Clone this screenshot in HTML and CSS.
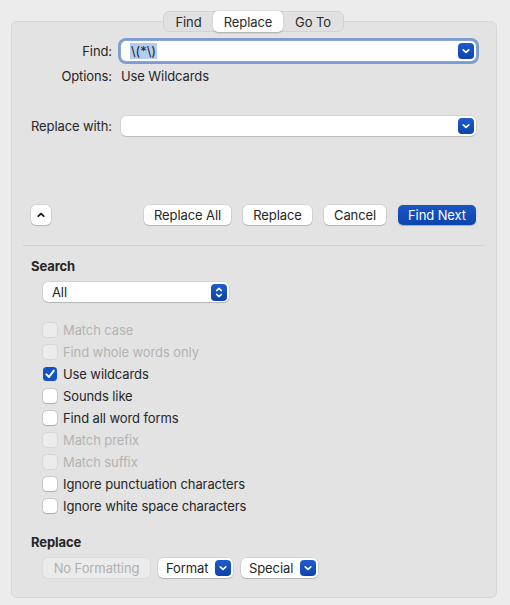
FILE: index.html
```html
<!DOCTYPE html>
<html>
<head>
<meta charset="utf-8">
<link rel="stylesheet" href="styles.css">
</head>
<body>
<div class="tabs">
  <div class="tab t-find">Find</div>
  <div class="tab t-replace sel">Replace</div>
  <div class="tab t-goto">Go To</div>
</div>
<div class="panel">
  <div class="row row-find">
    <div class="lbl">Find:</div>
    <div class="field focus">
      <span class="ftext"><span class="hl">\(*\)</span></span>
      <span class="drop"><svg width="16" height="16" viewBox="0 0 16 16"><path d="M5.2 6.8 L8 9.4 L10.8 6.8" fill="none" stroke="#fff" stroke-width="1.6" stroke-linecap="round" stroke-linejoin="round"/></svg></span>
    </div>
  </div>
  <div class="row row-options">
    <div class="lbl">Options:</div>
    <div class="val">Use Wildcards</div>
  </div>
  <div class="row row-replace">
    <div class="lbl">Replace with:</div>
    <div class="field">
      <span class="ftext"></span>
      <span class="drop"><svg width="16" height="16" viewBox="0 0 16 16"><path d="M5.2 6.8 L8 9.4 L10.8 6.8" fill="none" stroke="#fff" stroke-width="1.6" stroke-linecap="round" stroke-linejoin="round"/></svg></span>
    </div>
  </div>
  <div class="actions">
    <div class="btn btn-up"><svg width="20" height="20" viewBox="0 0 20 20"><path d="M7.3 11.2 L10 8.6 L12.7 11.2" fill="none" stroke="#1a1a1a" stroke-width="1.8" stroke-linecap="round" stroke-linejoin="round"/></svg></div>
    <div class="spacer"></div>
    <div class="btn w-all">Replace All</div>
    <div class="btn w-rep">Replace</div>
    <div class="btn w-cancel">Cancel</div>
    <div class="btn primary w-next">Find Next</div>
  </div>
  <div class="sep"></div>
  <div class="heading h-search">Search</div>
  <div class="popup">
    <span class="ptext">All</span>
    <span class="stepper"><svg width="16" height="17" viewBox="0 0 16 17"><path d="M5.6 6.6 L8 4.4 L10.4 6.6 M5.6 10.4 L8 12.6 L10.4 10.4" fill="none" stroke="#fff" stroke-width="1.5" stroke-linecap="round" stroke-linejoin="round"/></svg></span>
  </div>
  <div class="checks">
    <div class="chk dis"><span class="box"></span><span>Match case</span></div>
    <div class="chk dis"><span class="box"></span><span>Find whole words only</span></div>
    <div class="chk"><span class="box on"><svg width="14" height="14" viewBox="0 0 14 14"><path d="M3.4 7.4 L6 10 L10.8 3.6" fill="none" stroke="#fff" stroke-width="2" stroke-linecap="round" stroke-linejoin="round"/></svg></span><span>Use wildcards</span></div>
    <div class="chk"><span class="box"></span><span>Sounds like</span></div>
    <div class="chk"><span class="box"></span><span>Find all word forms</span></div>
    <div class="chk dis"><span class="box"></span><span>Match prefix</span></div>
    <div class="chk dis"><span class="box"></span><span>Match suffix</span></div>
    <div class="chk"><span class="box"></span><span>Ignore punctuation characters</span></div>
    <div class="chk"><span class="box"></span><span>Ignore white space characters</span></div>
  </div>
  <div class="heading h-replace">Replace</div>
  <div class="fmt-row">
    <div class="btn disabled w-nofmt">No Formatting</div>
    <div class="btn pop w-format"><span>Format</span><span class="drop sm"><svg width="16" height="16" viewBox="0 0 16 16"><path d="M5.2 6.8 L8 9.4 L10.8 6.8" fill="none" stroke="#fff" stroke-width="1.6" stroke-linecap="round" stroke-linejoin="round"/></svg></span></div>
    <div class="btn pop w-special"><span>Special</span><span class="drop sm"><svg width="16" height="16" viewBox="0 0 16 16"><path d="M5.2 6.8 L8 9.4 L10.8 6.8" fill="none" stroke="#fff" stroke-width="1.6" stroke-linecap="round" stroke-linejoin="round"/></svg></span></div>
  </div>
</div>
</body>
</html>
```

FILE: styles.css
```css
* { box-sizing: border-box; }
html, body { margin: 0; padding: 0; }
body {
  width: 510px;
  height: 605px;
  background: #ececec;
  font-family: Inter, "Liberation Sans", sans-serif;
  font-size: 13px;
  letter-spacing: -0.1px;
  color: #262626;
  padding-top: 11px;
  overflow: hidden;
}
.tabs {
  position: relative;
  z-index: 2;
  display: flex;
  width: 181px;
  height: 21px;
  margin: 0 0 -11px 163px;
  background: #e1e1e1;
  border: 1px solid #d3d3d3;
  border-radius: 6px;
  padding: 0;
}
.tab {
  display: flex;
  align-items: center;
  justify-content: center;
  height: 19px;
  font-size: 13px;
  color: #2a2a2a;
}
.t-find { width: 49px; }
.t-replace { width: 70px; }
.t-goto { width: 60px; }
.tab.sel {
  background: #fff;
  border-radius: 5px;
  height: 21px;
  margin-top: -1px;
  box-shadow: 0 0.5px 1.5px rgba(0,0,0,0.25);
}
.panel {
  margin-left: 11px;
  width: 486px;
  height: 577px;
  background: #e3e3e3;
  border: 1px solid #d7d7d7;
  border-radius: 6px;
  padding-top: 19px;
}
.row {
  display: flex;
  align-items: center;
  height: 20px;
}
.lbl {
  width: 100px;
  text-align: right;
  flex: none;
}
.val { margin-left: 9px; }
.field {
  margin-left: 9px;
  width: 355px;
  height: 20px;
  background: #fff;
  border-radius: 5px;
  box-shadow: 0 0 0 0.5px rgba(0,0,0,0.12), 0 1px 1px rgba(0,0,0,0.12);
  display: flex;
  align-items: center;
  padding-left: 9px;
  padding-right: 2px;
}
.field.focus {
  box-shadow: 0 0 0 1px #8aa6d8, 0 0 0 3px #7d9cd4;
}
.ftext { flex: 1; display: flex; align-items: center; }
.hl {
  background: #b3cdf1;
  padding: 0 1px;
  line-height: 16px;
}
.drop {
  width: 16px;
  height: 16px;
  border-radius: 4px;
  background: linear-gradient(#1f5bd0, #0d43a8);
  display: flex;
  flex: none;
}
.row-options { margin-top: 5px; }
.row-replace { margin-top: 30px; }
.actions {
  display: flex;
  align-items: center;
  margin-top: 69px;
  padding-left: 19px;
  padding-right: 20px;
  gap: 12px;
  height: 20px;
}
.spacer { flex: 1; }
.btn {
  height: 20px;
  background: #fff;
  border-radius: 5px;
  box-shadow: 0 0 0 0.5px rgba(0,0,0,0.14), 0 1px 1px rgba(0,0,0,0.14);
  display: flex;
  align-items: center;
  justify-content: center;
  flex: none;
  color: #262626;
}
.btn-up { width: 20px; }
.w-all { width: 87px; }
.w-rep { width: 69px; }
.w-cancel { width: 62px; }
.w-next { width: 78px; }
.btn.primary {
  background: linear-gradient(#1b55c4, #0c45ac);
  color: #fff;
  box-shadow: 0 0.5px 1px rgba(0,0,0,0.25);
}
.sep {
  margin: 20px 12px 0 11px;
  height: 1px;
  background: #d0d0d0;
}
.heading {
  font-weight: 700;
  line-height: 16px;
  padding-left: 19px;
}
.h-search { margin-top: 12px; }
.popup {
  margin: 8px 0 0 31px;
  width: 186px;
  height: 20px;
  background: #fff;
  border-radius: 5px;
  box-shadow: 0 0 0 0.5px rgba(0,0,0,0.14), 0 1px 1px rgba(0,0,0,0.14);
  display: flex;
  align-items: center;
  padding-left: 9px;
  padding-right: 2px;
}
.ptext { flex: 1; }
.stepper {
  width: 16px;
  height: 17px;
  border-radius: 4px;
  background: linear-gradient(#1f5bd0, #0d43a8);
  display: flex;
}
.checks { margin-top: 17px; padding-left: 31px; }
.chk {
  display: flex;
  align-items: center;
  height: 22px;
  gap: 6px;
}
.box {
  width: 14px;
  height: 14px;
  border-radius: 3.5px;
  background: #fff;
  box-shadow: 0 0 0 0.5px rgba(0,0,0,0.2), 0 0.5px 1px rgba(0,0,0,0.15);
  display: flex;
  flex: none;
}
.chk.dis { color: #b3b3b3; }
.chk.dis .box {
  background: #ececec;
  box-shadow: 0 0 0 0.5px rgba(0,0,0,0.1);
}
.box.on {
  background: #1551c6;
  box-shadow: none;
}
.h-replace { margin-top: 17px; }
.fmt-row {
  display: flex;
  gap: 8px;
  margin: 8px 0 0 31px;
}
.btn.disabled {
  background: #ebebeb;
  color: #b0b0b0;
  box-shadow: 0 0 0 0.5px rgba(0,0,0,0.06);
}
.w-nofmt { width: 107px; }
.btn.pop {
  justify-content: space-between;
  padding-left: 8px;
  padding-right: 2px;
}
.w-format { width: 75px; }
.w-special { width: 77px; }
```
